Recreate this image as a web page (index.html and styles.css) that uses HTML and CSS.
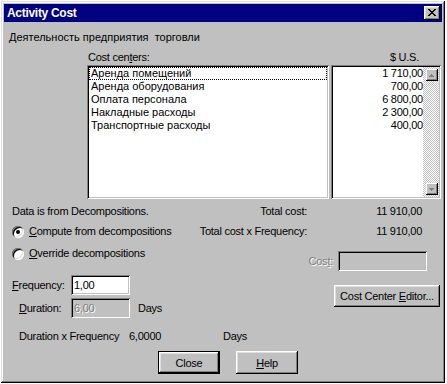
FILE: index.html
```html
<!DOCTYPE html>
<html>
<head>
<meta charset="utf-8">
<link rel="stylesheet" href="styles.css">
</head>
<body>
<div class="window">
  <div class="titlebar">
    <span class="title">Activity Cost</span>
    <span class="tb-close"><svg width="8" height="7" viewBox="0 0 8 7" shape-rendering="crispEdges"><path d="M0 0h2v1H0zM6 0h2v1H6zM1 1h2v1H1zM5 1h2v1H5zM2 2h4v1H2zM3 3h2v1H3zM2 4h4v1H2zM1 5h2v1H1zM5 5h2v1H5zM0 6h2v1H0zM6 6h2v1H6z" fill="#000"/></svg></span>
  </div>
  <div class="client">
    <div class="desc">Деятельность предприятия&nbsp; торговли</div>
    <div class="lists">
      <div class="col centers">
        <div class="col-label">Cost cen<u>t</u>ers:</div>
        <div class="listbox">
          <div class="item focus">Аренда помещений</div>
          <div class="item">Аренда оборудования</div>
          <div class="item">Оплата персонала</div>
          <div class="item">Накладные расходы</div>
          <div class="item">Транспортные расходы</div>
        </div>
      </div>
      <div class="col amounts">
        <div class="col-label right">$ U.S.</div>
        <div class="listbox amount-box">
          <div class="amount-items">
            <div class="item">1 710,00</div>
            <div class="item">700,00</div>
            <div class="item">6 800,00</div>
            <div class="item">2 300,00</div>
            <div class="item">400,00</div>
          </div>
          <div class="vscroll">
            <span class="sb-btn"><svg width="5" height="3" viewBox="0 0 5 3" shape-rendering="crispEdges"><path d="M2 0h1v1H2zM1 1h3v1H1zM0 2h5v1H0z" fill="#808080"/></svg></span>
            <span class="sb-btn"><svg width="5" height="3" viewBox="0 0 5 3" shape-rendering="crispEdges"><path d="M0 0h5v1H0zM1 1h3v1H1zM2 2h1v1H2z" fill="#808080"/></svg></span>
          </div>
        </div>
      </div>
    </div>

    <div class="row r1">
      <div class="left">Data is from Decompositions.</div>
      <div class="lbl">Total cost:</div>
      <div class="val">11 910,00</div>
    </div>
    <div class="row r2">
      <div class="left"><span class="radio checked"></span><span><u>C</u>ompute from decompositions</span></div>
      <div class="lbl">Total cost x Frequency:</div>
      <div class="val">11 910,00</div>
    </div>
    <div class="row r3">
      <div class="left"><span class="radio"></span><span><u>O</u>verride decompositions</span></div>
      <div class="cost-group">
        <span class="dis-label">Cos<u>t</u>:</span>
        <span class="edit disabled cost-edit"></span>
      </div>
    </div>

    <div class="fd-block">
      <div class="fd-fields">
        <div class="field freq">
          <span class="flabel"><u>F</u>requency:</span>
          <span class="edit">1,00</span>
        </div>
        <div class="field dur">
          <span class="flabel"><u>D</u>uration:</span>
          <span class="edit disabled"><span class="dis-text">6,00</span></span>
          <span class="unit">Days</span>
        </div>
      </div>
      <button class="btn cce">Cost Center <u>E</u>ditor...</button>
    </div>

    <div class="dxf">
      <span class="dxf-label">Duration x Frequency</span>
      <span class="dxf-val">6,0000</span>
      <span class="dxf-unit">Days</span>
    </div>

    <div class="buttons">
      <button class="btn default">Close</button>
      <button class="btn"><u>H</u>elp</button>
    </div>
  </div>
</div>
</body>
</html>
```

FILE: styles.css
```css
* { box-sizing: border-box; }

body {
  margin: 0;
  background: #fff;
  font-family: "Liberation Sans", Arial, sans-serif;
  font-size: 11px;
  letter-spacing: -0.25px;
  color: #000;
}

.window {
  width: 444px;
  height: 382px;
  margin: 1px 0 0 1px;
  padding: 3px;
  background: #c0c0c0;
  box-shadow: inset -1px -1px #000, inset 1px 1px #dfdfdf, inset -2px -2px #808080, inset 2px 2px #fff;
  display: flex;
  flex-direction: column;
}

.titlebar {
  height: 18px;
  background: #000080;
  color: #fff;
  display: flex;
  align-items: center;
  justify-content: space-between;
  padding: 0 2px 0 3px;
  font-weight: bold;
  font-size: 12px;
  letter-spacing: -0.3px;
}

.tb-close {
  width: 16px;
  height: 14px;
  background: #c0c0c0;
  box-shadow: inset -1px -1px #000, inset 1px 1px #fff, inset -2px -2px #808080, inset 2px 2px #dfdfdf;
  display: flex;
  align-items: center;
  justify-content: center;
  padding: 0 1px 1px 0;
}
.tb-close svg { display: block; }

.client {
  flex: 1;
  display: flex;
  flex-direction: column;
}

.desc {
  margin-top: 9px;
  padding-left: 5px;
  line-height: 13px;
  letter-spacing: 0;
}

.lists {
  margin-top: 7px;
  padding-left: 83px;
  display: flex;
  gap: 2px;
}

.col-label {
  line-height: 13px;
  padding-left: 1px;
}
.col-label.right {
  text-align: right;
  padding-right: 22px;
}

.centers { width: 242px; }
.amounts { width: 110px; }
.centers .item { letter-spacing: 0; }

.listbox {
  margin-top: 1px;
  height: 134px;
  background: #fff;
  padding: 2px;
  box-shadow: inset 1px 1px #808080, inset -1px -1px #fff, inset 2px 2px #000, inset -2px -2px #c0c0c0;
}

.item {
  line-height: 13px;
  padding-left: 2px;
  white-space: nowrap;
}
.item.focus {
  outline: 1px dotted #000;
  outline-offset: -1px;
}

.amount-box { display: flex; }
.amount-items { flex: 1; text-align: right; }

.vscroll {
  width: 16px;
  background: repeating-conic-gradient(#fff 0 25%, #c0c0c0 0 50%) 0 0 / 2px 2px;
  display: flex;
  flex-direction: column;
  justify-content: space-between;
  align-items: center;
  padding: 2px 0 2px 1px;
}

.sb-btn {
  width: 12px;
  height: 12px;
  background: #c0c0c0;
  box-shadow: inset -1px -1px #000, inset 1px 1px #fff, inset -2px -2px #808080;
  display: flex;
  align-items: center;
  justify-content: center;
}
.sb-btn svg { display: block; }

.row {
  display: flex;
  line-height: 13px;
}
.row .left {
  width: 160px;
  padding-left: 8px;
  display: flex;
  align-items: center;
  gap: 5px;
  white-space: nowrap;
  height: 13px;
}
.row .lbl { width: 143px; text-align: right; white-space: nowrap; }
.row .val { width: 115px; text-align: right; }

.r1 { margin-top: 6px; }
.r2 { margin-top: 7px; }
.r3 { margin-top: 9px; height: 24px; }

.radio {
  width: 12px;
  height: 12px;
  border-radius: 50%;
  background: #fff;
  box-shadow: inset 1px 1px #808080, inset -1px -1px #fff, inset 2px 2px #000, inset -2px -2px #dfdfdf;
  display: flex;
  align-items: center;
  justify-content: center;
  flex: none;
}
.radio.checked::after {
  content: "";
  width: 4px;
  height: 4px;
  border-radius: 50%;
  background: #000;
}

.cost-group {
  margin-left: auto;
  margin-right: 15px;
  margin-top: 4px;
  display: flex;
  align-items: center;
  gap: 5px;
  height: 20px;
}

.dis-label, .dis-text {
  color: #808080;
  text-shadow: 1px 1px #fff;
}

.edit {
  height: 20px;
  width: 59px;
  background: #fff;
  padding: 0 3px;
  line-height: 20px;
  box-shadow: inset 1px 1px #808080, inset -1px -1px #fff, inset 2px 2px #000, inset -2px -2px #c0c0c0;
  display: block;
}
.edit.disabled { background: #c0c0c0; }
.cost-edit { width: 89px; }

.fd-block {
  margin-top: 4px;
  display: flex;
  align-items: flex-start;
}
.fd-fields { display: flex; flex-direction: column; gap: 3px; }

.field {
  display: flex;
  align-items: center;
  height: 20px;
}
.flabel { width: 67px; white-space: nowrap; }
.freq .flabel { padding-left: 8px; }
.dur .flabel { padding-left: 15px; }
.unit { margin-left: 8px; }

.btn {
  font: inherit;
  letter-spacing: inherit;
  color: #000;
  background: #c0c0c0;
  border: 0;
  padding: 0;
  box-shadow: inset -1px -1px #000, inset 1px 1px #fff, inset -2px -2px #808080, inset 2px 2px #dfdfdf;
}
.btn.default {
  border: 1px solid #000;
}

.cce {
  margin-left: auto;
  margin-right: 2px;
  margin-top: 10px;
  width: 106px;
  height: 22px;
}

.dxf {
  margin-top: 12px;
  padding-left: 15px;
  display: flex;
  line-height: 13px;
}
.dxf-label { width: 110px; }
.dxf-val { width: 94px; }

.buttons {
  margin-top: 8px;
  padding-left: 154px;
  display: flex;
  gap: 16px;
}
.buttons .btn {
  width: 62px;
  height: 23px;
}
```
